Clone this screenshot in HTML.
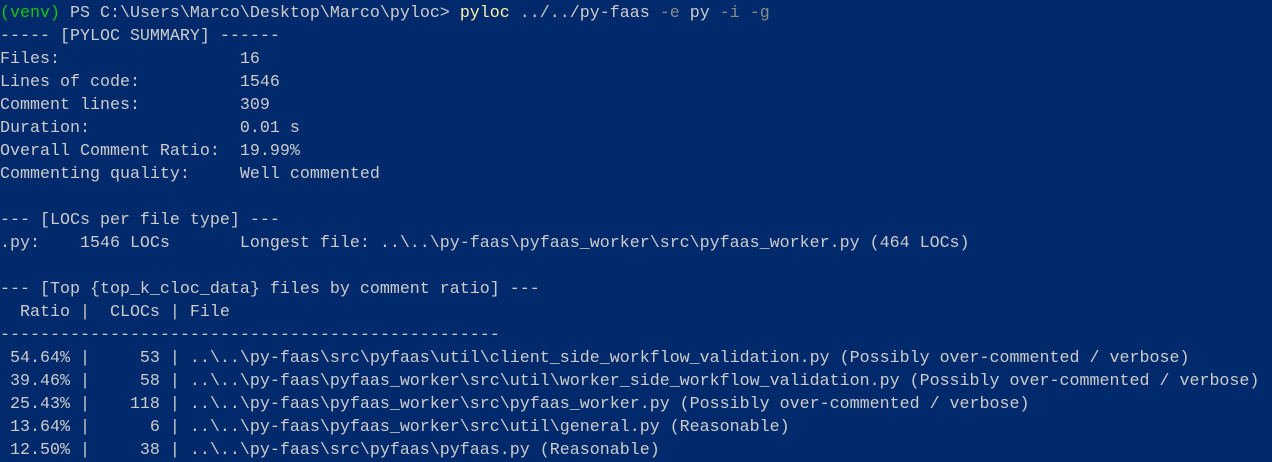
<!DOCTYPE html>
<html><head><meta charset="utf-8"><style>
html,body{margin:0;padding:0;background:#012a6c;width:1272px;height:462px;overflow:hidden}
pre{margin:0;padding:2px 0 0 0;font-family:"Liberation Mono",monospace;font-size:16.67px;line-height:23px;color:#cccccc;white-space:pre}
.g{color:#16c60c}.y{color:#f9f1a5}.d{color:#8a8a8a}
</style></head><body><pre><span class="g">(venv)</span> PS C:\Users\Marco\Desktop\Marco\pyloc&gt; <span class="y">pyloc</span> ../../py-faas <span class="d">-e</span> py <span class="d">-i</span> <span class="d">-g</span>
----- [PYLOC SUMMARY] ------
Files:                  16
Lines of code:          1546
Comment lines:          309
Duration:               0.01 s
Overall Comment Ratio:  19.99%
Commenting quality:     Well commented

--- [LOCs per file type] ---
.py:    1546 LOCs       Longest file: ..\..\py-faas\pyfaas_worker\src\pyfaas_worker.py (464 LOCs)

--- [Top {top_k_cloc_data} files by comment ratio] ---
  Ratio |  CLOCs | File
--------------------------------------------------
 54.64% |     53 | ..\..\py-faas\src\pyfaas\util\client_side_workflow_validation.py (Possibly over-commented / verbose)
 39.46% |     58 | ..\..\py-faas\pyfaas_worker\src\util\worker_side_workflow_validation.py (Possibly over-commented / verbose)
 25.43% |    118 | ..\..\py-faas\pyfaas_worker\src\pyfaas_worker.py (Possibly over-commented / verbose)
 13.64% |      6 | ..\..\py-faas\pyfaas_worker\src\util\general.py (Reasonable)
 12.50% |     38 | ..\..\py-faas\src\pyfaas\pyfaas.py (Reasonable)</pre></body></html>
